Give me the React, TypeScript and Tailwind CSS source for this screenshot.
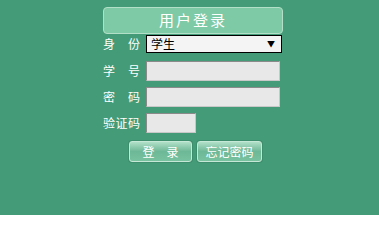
const font = "font-['SimSun','Noto_Sans_CJK_SC',sans-serif]";

const Label = ({ chars }: { chars: string[] }) => (
	<div className="flex w-[37px] justify-between text-[12px] leading-none text-white">
		{chars.map((c, i) => (
			<span key={i}>{c}</span>
		))}
	</div>
);

const Btn = ({ children, w }: { children: React.ReactNode; w: string }) => (
	<button
		className={`${w} h-[21px] rounded-[3px] border border-[#c6e8d6] bg-gradient-to-b from-[#b0dfc8] via-[#6db896] to-[#78c2a0] text-[12px] leading-none text-white shadow-[0_0_0_1px_#3d8e6c]`}
	>
		{children}
	</button>
);

const field = "h-[20px] border border-t-[#8a8a8a] border-l-[#8a8a8a] border-r-[#c8c8c8] border-b-[#c8c8c8] bg-[#e8e8e8] outline-none";

export default function App() {
	return (
		<div className={`h-[215px] w-[379px] bg-[#449b77] ${font}`}>
			<div className="flex flex-col pl-[103px] pt-[7px]">
				<div className="flex h-[27px] w-[180px] items-center justify-center rounded-[4px] border border-[#b3dfc8] bg-[#7ecaa6] text-[15px] tracking-[2px] text-white">
					用户登录
				</div>
				<div className="mt-px flex items-center gap-[6px]">
					<Label chars={["身", "份"]} />
					<div className="flex h-[18px] w-[136px] items-center justify-between border border-black bg-[#f4f4f4] pl-[4px] pr-[6px] text-[12px] leading-none text-black">
						<span>学生</span>
						<span className="text-[8px]">▼</span>
					</div>
				</div>
				<div className="mt-[8px] flex items-center gap-[6px]">
					<Label chars={["学", "号"]} />
					<input className={`w-[134px] ${field}`} />
				</div>
				<div className="mt-[6px] flex items-center gap-[6px]">
					<Label chars={["密", "码"]} />
					<input type="password" className={`w-[134px] ${field}`} />
				</div>
				<div className="mt-[6px] flex items-center gap-[6px]">
					<Label chars={["验", "证", "码"]} />
					<input className={`w-[50px] ${field}`} />
				</div>
				<div className="mt-[8px] flex gap-[5px] pl-[26px]">
					<Btn w="w-[63px]">登　录</Btn>
					<Btn w="w-[65px]">忘记密码</Btn>
				</div>
			</div>
		</div>
	);
}
